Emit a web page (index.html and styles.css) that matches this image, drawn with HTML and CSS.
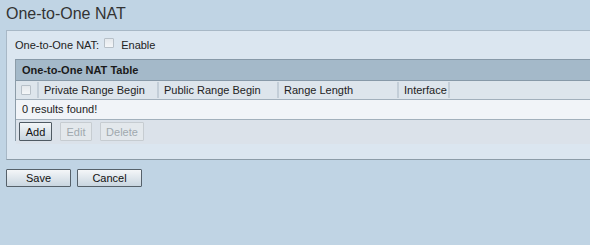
FILE: index.html
```html
<!DOCTYPE html>
<html>
<head>
<meta charset="utf-8">
<link rel="stylesheet" href="styles.css">
</head>
<body>
<div class="page">
  <h1 class="title">One-to-One NAT</h1>
  <div class="panel">
    <div class="enable-row">
      <span>One-to-One NAT:</span>
      <span class="cb"></span>
      <span>Enable</span>
    </div>
    <div class="table">
      <div class="table-title">One-to-One NAT Table</div>
      <div class="head-row">
        <div class="col col-cb"><span class="cb"></span></div>
        <div class="col col-w">Private Range Begin</div>
        <div class="col col-w">Public Range Begin</div>
        <div class="col col-w">Range Length</div>
        <div class="col col-i">Interface</div>
      </div>
      <div class="result-row">0 results found!</div>
      <div class="btn-row">
        <button class="btn btn-add">Add</button>
        <button class="btn btn-dis btn-edit">Edit</button>
        <button class="btn btn-dis btn-del">Delete</button>
      </div>
    </div>
  </div>
  <div class="actions">
    <button class="btn btn-main">Save</button>
    <button class="btn btn-main">Cancel</button>
  </div>
</div>
</body>
</html>
```
FILE: styles.css
```css
html, body {
  margin: 0;
  padding: 0;
  overflow: hidden;
}
body {
  background: #c0d4e4;
  font-family: "Liberation Sans", Arial, sans-serif;
  font-size: 11px;
  color: #222;
  width: 590px;
  height: 245px;
}
.page {
  padding: 0 0 0 6px;
  width: 584px;
  overflow: hidden;
}
.title {
  margin: 0;
  height: 30px;
  font-size: 16px;
  font-weight: normal;
  color: #333;
  line-height: 30px;
  position: relative;
  top: -1px;
}
.panel {
  background: #dbe6f0;
  border-top: 1px solid #a8b8c6;
  border-left: 1px solid #a8b8c6;
  border-bottom: 1px solid #8c9ca8;
  height: 128px;
  padding: 0 0 0 8px;
}
.enable-row {
  display: flex;
  align-items: center;
  height: 28px;
  color: #222;
}
.enable-row .cb {
  margin: 0 7px 4px 5px;
}
.cb {
  display: inline-block;
  width: 8px;
  height: 8px;
  border: 1px solid #b7c0c8;
  background: linear-gradient(#e4e8ec, #f4f6f8);
  border-radius: 1px;
}
.table {
  border-left: 1px solid #8c9ca8;
  height: 82px;
}
.table-title {
  background: #a4b9c9;
  border-top: 1px solid #8799a8;
  border-bottom: 1px solid #8799a8;
  height: 20px;
  line-height: 20px;
  font-weight: bold;
  padding-left: 6px;
  color: #1a1a1a;
}
.head-row {
  display: flex;
  height: 18px;
  background: #dde5ec;
  border-bottom: 1px solid #a2b0bc;
}
.col {
  height: 16px;
  margin-top: 1px;
  line-height: 16px;
  border-right: 2px solid #c3ced8;
  padding-left: 5px;
  box-sizing: border-box;
  color: #222;
}
.col-cb {
  width: 23px;
  display: flex;
  align-items: center;
}
.col-w {
  width: 120px;
}
.col-i {
  width: 51px;
}
.result-row {
  background: #f1f4f8;
  height: 19px;
  line-height: 19px;
  padding-left: 6px;
  border-bottom: 1px solid #a2b0bc;
}
.btn-row {
  display: flex;
  background: #dbe2ea;
  height: 22px;
  padding: 2px 0 0 3px;
  gap: 8px;
}
.btn {
  font-family: "Liberation Sans", Arial, sans-serif;
  font-size: 11px;
  padding: 0;
  border-radius: 1px;
  cursor: default;
}
.btn-add {
  width: 33px;
  height: 19px;
  border: 1px solid #4f5a63;
  background: linear-gradient(#f3f6f8, #c8d5df);
  color: #111;
}
.btn-dis {
  height: 19px;
  border: 1px solid #c6ccd1;
  background: #e3e8ec;
  color: #a0a8ae;
}
.btn-edit {
  width: 32px;
}
.btn-del {
  width: 44px;
}
.actions {
  display: flex;
  gap: 6px;
  margin-top: 9px;
}
.btn-main {
  width: 65px;
  height: 18px;
  border: 1px solid #56616a;
  background: linear-gradient(#f4f6f8, #c9d6e0);
  color: #111;
}
```
